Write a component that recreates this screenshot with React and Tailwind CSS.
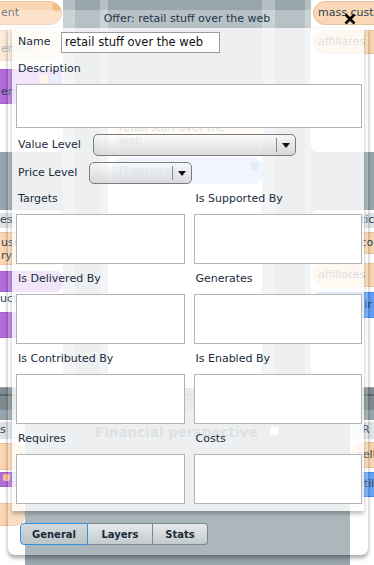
import React from 'react';

// Background board that lies behind the dialog (columns of cards and pills).
const pill = 'relative flex shrink-0 items-center overflow-hidden whitespace-nowrap border text-[11px] text-[#2f4356]';
const peach = 'border-[#eec49e] bg-[#fbd6b1]';
const purple = 'border-[#a563cf] bg-[#b26ddb]';
const blue = 'border-[#4c8ff0] bg-[#5e9ef6]';

function LeftTop() {
  return (
    <div className="flex w-[63px] shrink-0 flex-col">
      <div className="flex h-[152px] flex-col rounded-br-[6px] bg-white pt-[1px]">
        <div className={`${pill} ${peach} -ml-[30px] h-[24px] w-[92px] rounded-[12px] pl-[30px]`}>
          ent
          <span className="absolute right-0 top-[1px] h-[9px] w-[9px] rounded-full bg-[#f7bb86]" />
        </div>
        <div className={`${pill} -ml-[30px] mt-[5px] h-[31px] w-[92px] items-end rounded-[12px] border-[#f6e2cf] bg-[#fdebd9] pb-[3px] pl-[30px] text-[#aab4bb]`}>
          ement
        </div>
        <div className={`${pill} ${purple} -ml-[30px] mt-[8px] h-[35px] w-[92px] items-end rounded-[6px] pb-[3px] pl-[30px]`}>
          em
          <span className="absolute right-[13px] top-[4px] h-[9px] w-[9px] rounded-[2px] bg-[#f7c393]" />
          <span className="absolute right-[1px] top-[4px] h-[9px] w-[9px] rounded-[2px] bg-[#7fb0f7]" />
        </div>
      </div>
      <div className="mt-[58px] flex h-[177px] flex-col rounded-r-[6px] bg-white pt-[3px]">
        <div className="flex h-[15px] items-center bg-[#dfe4e6] text-[11px] text-[#2f4356]">es</div>
        <div className={`${pill} ${peach} -ml-[30px] mt-[4px] h-[33px] w-[92px] flex-col items-start justify-center rounded-[10px] pl-[30px] leading-[13px]`}>
          <span>use</span>
          <span>ry</span>
        </div>
        <div className={`${pill} ${purple} -ml-[30px] mt-[6px] h-[21px] w-[92px] rounded-[6px]`} />
        <div className="h-[14px] text-[11px] leading-[14px] text-[#2f4356]">uct</div>
        <div className={`${pill} ${purple} -ml-[30px] mt-[6px] h-[26px] w-[92px] rounded-[6px]`} />
      </div>
    </div>
  );
}

function RightTop() {
  return (
    <div className="flex w-[63px] shrink-0 flex-col">
      <div className="flex h-[152px] flex-col gap-[5px] rounded-bl-[6px] bg-white pl-[2px] pt-[1px]">
        <div className={`${pill} h-[24px] w-[80px] rounded-[12px] border-[#e6bf9b] bg-[#fad7b6] pl-[4px]`}>mass custo</div>
        <div className={`${pill} ${peach} h-[24px] w-[80px] rounded-[12px] pl-[4px]`}>affiliates</div>
      </div>
      <div className="mt-[58px] flex h-[177px] flex-col rounded-l-[6px] bg-white pt-[3px]">
        <div className="flex h-[15px] items-center bg-[#dfe4e6] pl-[43px] text-[11px] text-[#2f4356]">utic</div>
        <div className={`${pill} ${peach} ml-[2px] mt-[4px] h-[22px] w-[80px] rounded-[10px] pl-[43px]`}>.co</div>
        <div className={`${pill} ${peach} ml-[2px] mt-[9px] h-[24px] w-[80px] rounded-[12px] pl-[4px]`}>affiliates</div>
        <div className={`${pill} ${blue} ml-[2px] mt-[5px] h-[26px] w-[80px] rounded-[6px] pl-[41px]`}>c ir</div>
      </div>
    </div>
  );
}

function MiddleTop() {
  return (
    <div className="flex flex-1">
      <div className="w-[12px] bg-[#b4c0c5]" />
      <div className="w-[25px]" />
      <div className="w-[8px] bg-[#b4c0c5]" />
      <div className="flex w-[154px] flex-col pt-[108px]">
        <div className="flex h-[280px] flex-col items-start bg-white">
          <div className={`${pill} ml-[6px] mt-[4px] h-[38px] w-[150px] flex-col items-start justify-end rounded-[10px] border-[#f0cfae] bg-[#fbe3cb] pb-[2px] pl-[4px] leading-[13px]`}>
            <span>retail stuff over the</span>
            <span>web</span>
            <span className="absolute right-[4px] top-[4px] h-[9px] w-[9px] rounded-full bg-[#f7bb86]" />
          </div>
          <div className={`${pill} ml-[4px] mt-[8px] h-[26px] w-[151px] rounded-[10px] border-[#8cb6f2] bg-[#a9c9f7] pl-[6px]`}>
            IT services
            <span className="absolute right-[3px] top-[3px] h-[8px] w-[8px] rounded-[2px] bg-[#5d9af0]" />
          </div>
        </div>
      </div>
      <div className="w-[13px] bg-[#b4c0c5]" />
      <div className="w-[30px]" />
      <div className="w-[6px] bg-[#b4c0c5]" />
    </div>
  );
}

function Canvas() {
  return (
    <div className="absolute inset-0 flex flex-col overflow-hidden bg-[#98a5ac]">
      <div className="flex h-[388px]">
        <LeftTop />
        <MiddleTop />
        <RightTop />
      </div>
      <div className="h-[22px] bg-[#7f8b91] pt-[6px]">
        <div className="h-[2px] bg-[#5f6b72]" />
      </div>
      <div className="flex flex-1 pt-[10px]">
        <div className="flex w-[25px] flex-col bg-white pt-[2px]">
          <div className="flex h-[17px] items-center bg-[#dfe4e6] text-[11px] text-[#2f4356]">s</div>
          <div className={`${pill} ${peach} -ml-[30px] mt-[4px] h-[27px] w-[55px] rounded-[10px]`} />
          <div className={`${pill} ${purple} -ml-[30px] mt-[2px] h-[15px] w-[55px] rounded-[4px]`}>
            <span className="absolute left-[32px] top-[1px] h-[7px] w-[7px] rounded-[2px] bg-[#f7c393]" />
            <span className="absolute left-[41px] top-[1px] h-[7px] w-[7px] rounded-[2px] bg-[#7fb0f7]" />
          </div>
          <div className={`${pill} ${peach} -ml-[30px] mt-[16px] h-[23px] w-[55px] rounded-[10px]`} />
        </div>
        <div className="flex flex-1 items-start pl-[70px] pt-[2px]">
          <span className="text-[13.5px] leading-[20px] font-bold text-[#46565f]">Financial perspective</span>
          <span className="ml-[12px] mt-[4px] h-[9px] w-[9px] border border-[#c9d0d4] bg-white" />
        </div>
        <div className="flex w-[24px] flex-col bg-white pt-[2px]">
          <div className="flex h-[17px] items-center bg-[#dfe4e6] pl-[12px] text-[11px] text-[#2f4356]">R</div>
          <div className={`${pill} ${peach} ml-[2px] mt-[3px] h-[26px] w-[40px] rounded-[10px] pl-[4px]`}>sell</div>
          <div className={`${pill} ml-[2px] mt-[4px] h-[25px] w-[40px] rounded-[5px] border-[#4c8ff0] bg-[#68a5f6] pl-[4px]`}>util</div>
        </div>
      </div>
    </div>
  );
}

function Select({ width }) {
  return (
    <div className={`flex h-[22px] items-center rounded-[5px] border border-[#7c7c7c] bg-linear-to-b from-white/40 to-[#cfcfcf]/70 ${width}`}>
      <div className="ml-auto flex h-full items-center">
        <div className="h-[14px] w-px bg-[#8a8a8a]" />
        <svg width="18" height="20" viewBox="0 0 18 20">
          <path d="M5 8h8l-4 5z" fill="#111" />
        </svg>
      </div>
    </div>
  );
}

function Field({ label }) {
  return (
    <div className="flex flex-col">
      <div className="h-[30px] pl-[2px] pt-[8px] leading-[14px]">{label}</div>
      <div className="h-[50px] border border-[#b3b3b3] bg-white" />
    </div>
  );
}

export default function App() {
  const fields = [
    'Targets', 'Is Supported By',
    'Is Delivered By', 'Generates',
    'Is Contributed By', 'Is Enabled By',
    'Requires', 'Costs',
  ];

  return (
    <div className="relative h-[565px] w-[374px] overflow-hidden font-['DejaVu_Sans',Verdana,sans-serif]">
      <Canvas />

      {/* dialog lying over the board */}
      <div className="absolute inset-x-0 top-[10px] flex flex-col">
        <div className="relative flex h-[18px] items-center justify-center text-[11px] text-[#23364a]">
          <div className="absolute inset-y-0 left-0 w-[313px] bg-white/30" />
          <span className="relative">Offer: retail stuff over the web</span>
          <svg className="absolute right-[18px] top-[3px]" width="12" height="12" viewBox="0 0 12 12">
            <path d="M1.5 1.5l9 9M10.5 1.5l-9 9" stroke="#000" strokeWidth="2.6" />
          </svg>
        </div>

        <div className="ml-[8px] flex w-[360px] flex-col rounded-b-[7px] bg-white/20 px-[4px] pb-[10px] shadow-[0_3px_4px_rgba(0,0,0,0.35)]">
          <div className="flex flex-col bg-white/[0.78] pb-[7px] pl-[4px] pr-[2px] pt-[4px] text-[11px] text-[#1b2c3d] shadow-[0_3px_4px_rgba(0,0,0,0.25)]">
            <div className="flex h-[21px] items-center">
              <div className="w-[45px] pl-[2px]">Name</div>
              <div className="flex h-[21px] w-[159px] items-center border border-[#9c9c9c] bg-white pl-[3px] text-[11.5px] text-[#111]">
                retail stuff over the web
              </div>
            </div>
            <div className="mt-[9px] h-[14px] pl-[2px] leading-[14px]">Description</div>
            <div className="mt-[8px] h-[44px] border border-[#b3b3b3] bg-white" />
            <div className="mt-[6px] flex h-[22px] items-center">
              <div className="w-[77px] pl-[2px]">Value Level</div>
              <Select width="w-[203px]" />
            </div>
            <div className="mt-[6px] flex h-[22px] items-center">
              <div className="w-[73px] pl-[2px]">Price Level</div>
              <Select width="w-[103px]" />
            </div>
            <div className="grid grid-cols-2 gap-x-[9px]">
              {fields.map((f) => (
                <Field key={f} label={f} />
              ))}
            </div>
          </div>

          <div className="ml-[8px] mt-[12px] flex h-[22px] text-[10px] font-bold text-[#1b2a38]">
            <button className="w-[68px] rounded-l-[4px] border border-[#2f93e3] bg-linear-to-b from-[#d3d9dc] to-[#bcc4c8]">General</button>
            <button className="w-[65px] border border-l-0 border-[#7d878c] bg-linear-to-b from-[#e6eaec] to-[#c3cacd]">Layers</button>
            <button className="w-[55px] rounded-r-[4px] border border-l-0 border-[#7d878c] bg-linear-to-b from-[#e6eaec] to-[#c3cacd]">Stats</button>
          </div>
        </div>
      </div>
    </div>
  );
}
